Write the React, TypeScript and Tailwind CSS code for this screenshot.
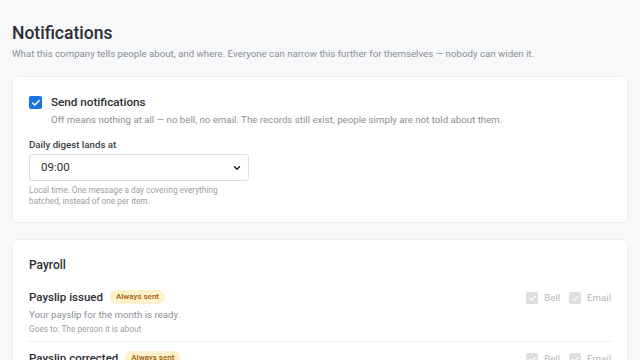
import { Check, ChevronDown } from "lucide-react";

interface EventRow {
  title: string;
  description: string;
  goesTo: string;
}

const PAYROLL: EventRow[] = [
  {
    title: "Payslip issued",
    description: "Your payslip for the month is ready.",
    goesTo: "The person it is about",
  },
  {
    title: "Payslip corrected",
    description: "A correction was made to your payslip.",
    goesTo: "The person it is about",
  },
];

function DisabledBox() {
  return (
    <span className="flex h-[12px] w-[12px] items-center justify-center rounded-[2px] bg-[#dcdee1]">
      <Check className="h-[9px] w-[9px] text-white" strokeWidth={3} />
    </span>
  );
}

export default function App() {
  return (
    <div
      className="min-h-screen bg-[#f7f8fa] px-3 pt-[22px] text-[#212529]"
      style={{ fontFamily: 'Roboto, "Liberation Sans", sans-serif' }}
    >
      <h1 className="text-[17.5px] font-medium leading-[22px] text-[#2b2f33]">Notifications</h1>
      <p className="mt-[3px] text-[9.7px] leading-[14px] text-[#8a8f96]">
        What this company tells people about, and where. Everyone can narrow this further for
        themselves — nobody can widen it.
      </p>

      {/* General settings */}
      <section className="mt-[15px] rounded-[6px] border border-[#eceef0] bg-white px-4 pb-[15px] pt-[17px]">
        <div className="flex items-start gap-[9px]">
          <span className="mt-[2px] flex h-[13px] w-[13px] items-center justify-center rounded-[2px] bg-[#1a73e8]">
            <Check className="h-[10px] w-[10px] text-white" strokeWidth={3.5} />
          </span>
          <div>
            <div className="text-[11.7px] font-medium leading-[16px] text-[#2b2f33]">
              Send notifications
            </div>
            <div className="mt-[3px] text-[9.7px] leading-[14px] text-[#8a8f96]">
              Off means nothing at all — no bell, no email. The records still exist, people simply
              are not told about them.
            </div>
          </div>
        </div>

        <div className="mt-[11px] text-[9.7px] font-medium leading-[14px] text-[#3a3f45]">
          Daily digest lands at
        </div>
        <div className="mt-[2px] flex h-[27px] w-[220px] items-center justify-between rounded-[3px] border border-[#dcdfe3] bg-white pl-[11px] pr-[6px]">
          <span className="text-[11.5px] text-[#2b2f33]">09:00</span>
          <ChevronDown className="h-[10px] w-[10px] text-[#222]" strokeWidth={3.5} />
        </div>
        <p className="mt-[4px] w-[200px] text-[8.3px] leading-[11px] text-[#9a9fa6]">
          Local time. One message a day covering everything batched, instead of one per item.
        </p>
      </section>

      {/* Payroll */}
      <section className="mt-[16px] rounded-[6px] border border-[#eceef0] bg-white px-4 pt-[17px]">
        <h2 className="text-[12px] font-medium leading-[16px] text-[#2b2f33]">Payroll</h2>
        <div className="mt-[8px] flex flex-col">
          {PAYROLL.map((row, i) => (
            <div
              key={row.title}
              className={`flex items-start justify-between pb-[6px] pt-[8px] ${
                i > 0 ? "border-t border-[#eceef0]" : ""
              }`}
            >
              <div>
                <div className="flex items-center gap-[7px]">
                  <span className="text-[11.5px] font-medium leading-[16px] text-[#2b2f33]">
                    {row.title}
                  </span>
                  <span className="rounded-full bg-[#fdf1c9] px-[6px] py-[1px] text-[8px] font-medium leading-[12px] text-[#a15c07]">
                    Always sent
                  </span>
                </div>
                <div className="mt-[3px] text-[9.7px] leading-[14px] text-[#8a8f96]">
                  {row.description}
                </div>
                <div className="mt-[1px] text-[8.3px] leading-[12px] text-[#9a9fa6]">
                  Goes to: {row.goesTo}
                </div>
              </div>
              <div className="mt-[2px] flex items-center gap-[6px] text-[9.7px] text-[#b4b8bd]">
                <DisabledBox />
                <span>Bell</span>
                <span className="ml-[3px]">
                  <DisabledBox />
                </span>
                <span>Email</span>
              </div>
            </div>
          ))}
        </div>
      </section>
    </div>
  );
}
